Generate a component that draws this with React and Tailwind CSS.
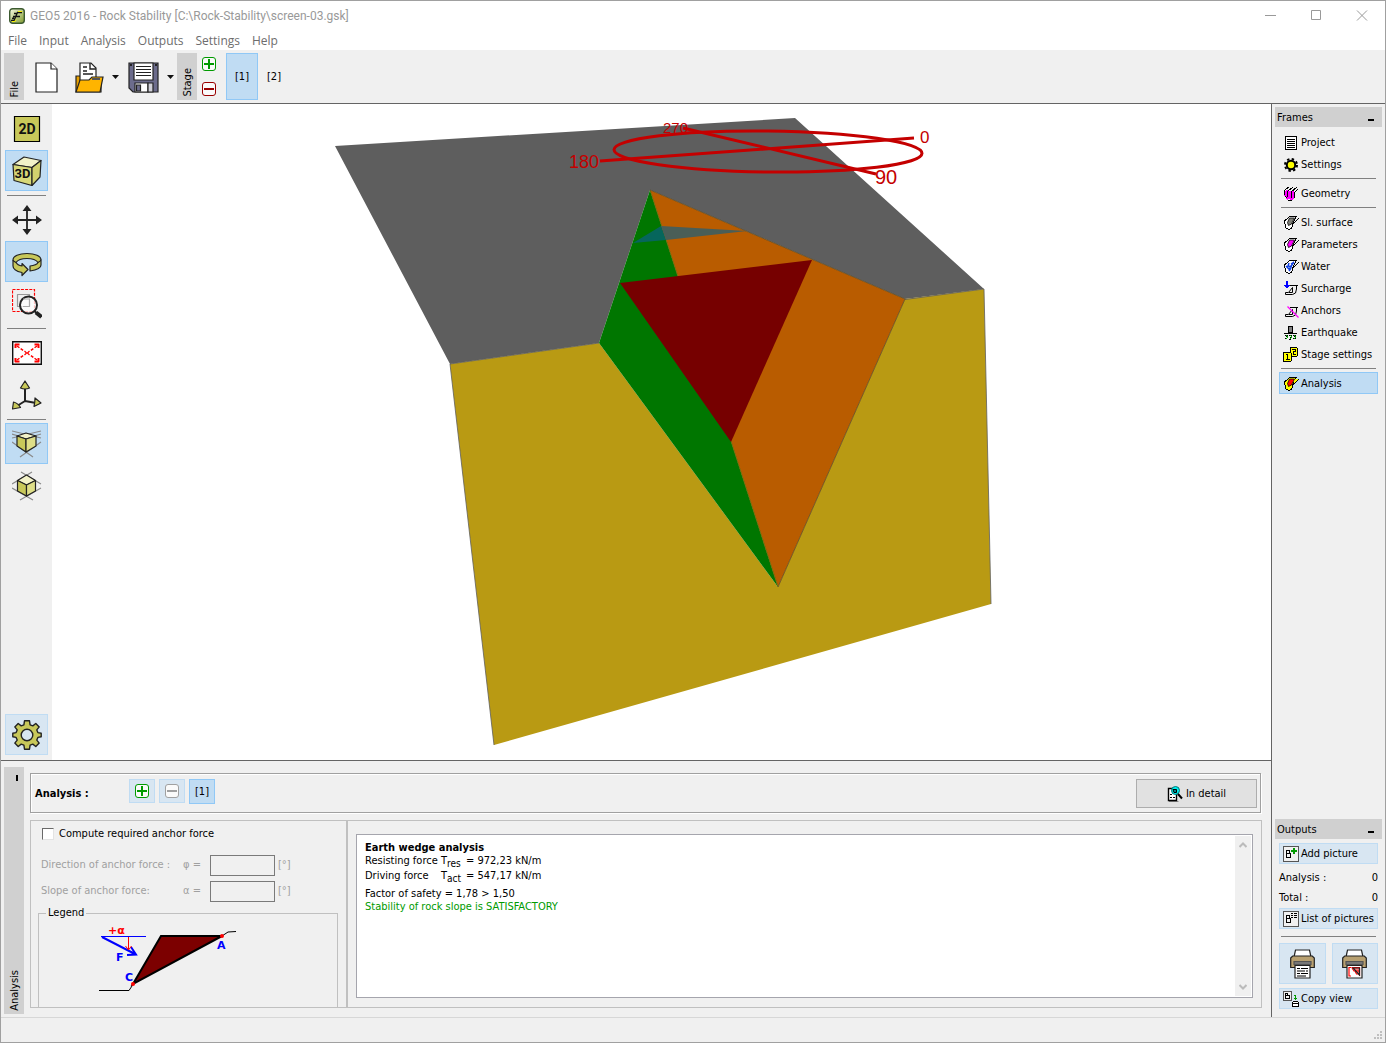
import clsx from "clsx";

const TAHOMA = "font-['DejaVu_Sans_Condensed','DejaVu_Sans','Noto_Sans',sans-serif]";

const MENU = ["File", "Input", "Analysis", "Outputs", "Settings", "Help"];

const FRAMES = [
  [
    { label: "Project", icon: <ProjectIcon /> },
    { label: "Settings", icon: <CogIcon /> },
  ],
  [{ label: "Geometry", icon: <GeometryIcon /> }],
  [
    { label: "Sl. surface", icon: <RockIcon fill="#808078" /> },
    { label: "Parameters", icon: <RockIcon fill="#ff00ff" /> },
    { label: "Water", icon: <WaterIcon /> },
    { label: "Surcharge", icon: <SurchargeIcon /> },
    { label: "Anchors", icon: <AnchorsIcon /> },
    { label: "Earthquake", icon: <EarthquakeIcon /> },
    { label: "Stage settings", icon: <StageIcon /> },
  ],
  [{ label: "Analysis", icon: <RockIcon fill="#ff0000" body="#ffff00" />, active: true }],
];

/* ---------- small icons ---------- */

function Small({ children }) {
  return (
    <svg className="w-4 h-4 shrink-0" viewBox="0 0 16 16" fill="none" stroke="#000" strokeWidth="1" shapeRendering="crispEdges">
      {children}
    </svg>
  );
}

function ProjectIcon() {
  return (
    <Small>
      <path d="M2.500 1.500h11v13h-11z" fill="#fff" />
      <path d="M4 4.500h8M4 6.500h8M4 8.500h8M4 10.500h8M4 12.500h8" />
    </Small>
  );
}

function CogIcon() {
  return (
    <Small>
      <g shapeRendering="auto">
        <circle cx="8" cy="8" r="6" strokeWidth="2" strokeDasharray="2.360 2.352" />
        <circle cx="8" cy="8" r="4.200" fill="#ff0" strokeWidth="2" />
      </g>
    </Small>
  );
}

function GeometryIcon() {
  return (
    <Small>
      <path d="M1 5l3-1 2 1h5l1 2-1 6-3 1-2-1-2 1-1-3-2-1z" fill="#f0f" stroke="none" />
      <path d="M1.500 4v5M4.500 5v6M8.500 6v6M11.500 6v6M2 4l4-3M5 5l5-4M8 6l6-5M11 7l4-4M2 10l2 2M5 14h4" />
    </Small>
  );
}

function RockOutline({ body }) {
  return (
    <>
      <path d="M6.500 1.500L1.500 6v2.500l1.500 1-0.500 3 3 2 3-1 1.500-5 3-7z" fill={body} />
      <path d="M10 9l3-3 3-3" />
      <path d="M6 1.500h7" />
    </>
  );
}

function RockIcon({ fill, body = "#fff" }) {
  return (
    <Small>
      <RockOutline body={body} />
      {body !== "#fff" && <path d="M11 6.500L14.500 3h-3" fill={body} stroke={body} />}
      <path d="M6.500 3h5l-3 6-3 1.500-1-3z" fill={fill} shapeRendering="auto" strokeWidth="0.800" />
    </Small>
  );
}

function WaterIcon() {
  return (
    <Small>
      <RockOutline body="#fff" />
      <path d="M3 7l3 3 5-7M6 4l-1 3 4 1M11 3L8 5M6 12l2-3" stroke="#1040e0" strokeWidth="1.500" shapeRendering="auto" />
    </Small>
  );
}

function Slope() {
  return (
    <>
      <path d="M7 4.500h8M13.500 5v3l-1 4-3 1.500h-7v-2h3l4-5v5H6" shapeRendering="auto" />
    </>
  );
}

function SurchargeIcon() {
  return (
    <Small>
      <Slope />
      <path d="M2 0h2v4h2v1H5v1H4v1H2V6H1V5H0V4h2z" fill="#00f" stroke="none" transform="translate(1 0)" />
    </Small>
  );
}

function AnchorsIcon() {
  return (
    <Small>
      <Slope />
      <path d="M4.500 3.500l11 11" stroke="#f0f" strokeWidth="1.200" shapeRendering="auto" />
    </Small>
  );
}

function EarthquakeIcon() {
  return (
    <Small>
      <path d="M5.500 1.500h4v6h-4z" fill="#808080" />
      <path d="M1 8.500h13" />
      <path d="M2 10.500h3M6 10.500h3M10 10.500h3M3 11.500h1M7 12.500h2M11 11.500h1M2 13.500h2M6 14.500h2M10 13.500h3" />
      <path d="M3 10l2 2-2 2M7 10l2 2-2 2M11 10l2 2-2 2" stroke="#0a0" />
    </Small>
  );
}

function StageIcon() {
  return (
    <Small>
      <path d="M7.500 0.500h6l1 1v7l-1 1h-6z" fill="#ff0" />
      <path d="M0.500 5.500h7l1 1v7l-1 1h-7z" fill="#ff0" />
      <path d="M3 7.500h1.500V13M3 12.500h4" />
      <path d="M9 2.500h3.500v2H10v2.500h3" />
    </Small>
  );
}

function PictureFrame({ children }) {
  return (
    <>
      <path d="M0.500 0.500h15v15h-15z" fill="#f0f0f0" stroke="#555" />
      <path d="M3.500 4.500h3v3h-3zM3.500 7.500h4v4h-4z" />
      {children}
    </>
  );
}

function AddPictureIcon() {
  return (
    <Small>
      <PictureFrame>
        <path d="M8 5h6M11 2v6" stroke="#009a00" strokeWidth="2" />
      </PictureFrame>
    </Small>
  );
}

function ListIcon() {
  return (
    <Small>
      <PictureFrame>
        <path d="M8 2.500h2M11 2.500h3M8 4.500h2M11 4.500h3M8 6.500h2M11 6.500h3" />
      </PictureFrame>
    </Small>
  );
}

function CopyIcon() {
  return (
    <Small>
      <path d="M0.500 0.500h8v9h-8z" fill="#f0f0f0" stroke="#555" />
      <path d="M2.500 2.500h2v2h-2zM2.500 4.500h4v3h-4z" />
      <path d="M11 4.500h1.500V9M11 7.500h3" stroke="#009a00" />
      <path d="M9.500 11.500l1-1h4l1 1v4h-6zM9.500 12.500h6" fill="#fff" />
    </Small>
  );
}

function DetailIcon() {
  return (
    <svg className="w-4 h-4" viewBox="0 0 16 16" fill="none" stroke="#000">
      <path d="M2 15.500h9.500" stroke="#888" />
      <path d="M1.500 2.500h4l4 4v8h-8z" fill="#fff" strokeWidth="1.400" />
      <path d="M3 8.500h2M3 11.500h2M6 11.500h2" />
      <circle cx="8.500" cy="4.500" r="4" fill="#00f0f0" stroke="#077" />
      <path d="M6 3.500h3.500v3H7z" fill="#088" />
      <path d="M11 8l4 4.500" strokeWidth="2" />
    </svg>
  );
}

function PlusMinus({ kind, color }) {
  return (
    <svg className="w-[14px] h-[14px]" viewBox="0 0 14 14" fill="none" stroke={color}>
      <rect x="0.5" y="0.5" width="13" height="13" rx="2.5" fill="#fafafa" />
      <path d={kind === "plus" ? "M2 7h10M7 2v10" : "M2 7h10"} strokeWidth="2" />
    </svg>
  );
}

/* ---------- toolbar icons ---------- */

function AppIcon() {
  return (
    <svg className="w-4 h-4" viewBox="0 0 16 16">
      <defs>
        <linearGradient id="app" x1="0" y1="0" x2="1" y2="1">
          <stop offset="0" stopColor="#f8fbe6" />
          <stop offset="1" stopColor="#7f9a2c" />
        </linearGradient>
      </defs>
      <rect x="0.7" y="0.7" width="14.600" height="14.600" rx="3" fill="url(#app)" stroke="#3c5a30" strokeWidth="1.400" />
      <path d="M2 12.500h3l3.500-8h4.500M4 8.500h7M5 5.500h3M3 10.500l2-0.500" fill="none" stroke="#111" strokeWidth="1.300" />
      <path d="M3 13.500h3l1-2M9 3.500h4" fill="none" stroke="#f4f000" />
    </svg>
  );
}

function NewIcon() {
  return (
    <svg className="w-[23px] h-[31px]" viewBox="0 0 23 31" fill="#fff" stroke="#222" strokeWidth="1.200">
      <path d="M1 1h15l6 6v23H1z" />
      <path d="M16 1v6h6" />
    </svg>
  );
}

function OpenIcon() {
  return (
    <svg className="w-[29px] h-[31px]" viewBox="0 0 29 31" fill="none" stroke="#222" strokeWidth="1.200">
      <path d="M1 30V14h4l2 2h19v14z" fill="#e69f00" />
      <path d="M5 20V1h11l5 5v13z" fill="#fff" />
      <path d="M15 1v6h6M8 5h4M8 9h4M8 12h10" strokeWidth="1.400" />
      <path d="M1 30l4-12h9l3-3h11l-3 15z" fill="#ffb400" />
      <path d="M17 17h8" stroke="#555" strokeWidth="2" />
    </svg>
  );
}

function SaveIcon() {
  return (
    <svg className="w-[31px] h-[31px]" viewBox="0 0 31 31" fill="none" stroke="#222" strokeWidth="1.200">
      <path d="M1 1h29v29H5l-4-4z" fill="#6c6c8c" />
      <path d="M6 1h19v17H6z" fill="#fff" />
      <path d="M8 4.500h15M8 7.500h15M8 10.500h15M8 13.500h15" strokeWidth="1.200" />
      <path d="M2 3h2M27 3h2" strokeWidth="2" />
      <path d="M7 21h13v9H7z" fill="#fff" />
      <path d="M8.500 23h4v6h-4z" fill="#6c6c8c" />
      <path d="M20 21h5v9h-5z" fill="#d0d0d8" />
    </svg>
  );
}

function Caret() {
  return (
    <svg className="w-[7px] h-1" viewBox="0 0 7 4">
      <path d="M0 0h7L3.500 4z" fill="#111" />
    </svg>
  );
}

/* ---------- view icons, 30px grid ---------- */

function View({ children }) {
  return (
    <svg className="w-[30px] h-[30px]" viewBox="0 0 30 30" fill="none" stroke="#222" strokeWidth="1.200" strokeLinejoin="round">
      {children}
    </svg>
  );
}

const TWO_D = (
  <View>
    <path d="M2.500 2.500h25v25h-25z" fill="#c8c85a" stroke="#000" strokeLinejoin="miter" />
    <text x="15" y="20" textAnchor="middle" fontSize="14" fontWeight="700" fontFamily="Roboto, sans-serif" fill="#111" stroke="none">2D</text>
  </View>
);

const THREE_D = (
  <View>
    <path d="M1 8.500L12 1l17 3.500L20 11.500z" fill="#f2f2c8" />
    <path d="M1 8.500l19 3v18L2 24.500z" fill="#d8d878" />
    <path d="M20 11.500l9-7-1 16.500-8 8.500z" fill="#d2d26e" />
    <text x="10.500" y="22" textAnchor="middle" fontSize="13" fontWeight="700" fontFamily="Roboto, sans-serif" fill="#111" stroke="none">3D</text>
  </View>
);

const PAN = (
  <View>
    <path d="M15 4v22M4 15h22" strokeWidth="1.800" />
    <path d="M15 0l4.500 6h-9zM15 30l-4.500-6h9zM0 15l6-4.500v9zM30 15l-6 4.500v-9z" fill="#222" stroke="none" />
  </View>
);

const ROTATE = (
  <View>
    <path d="M1 13C1 9 7 6.500 15 6.500S29 9 29 13v5c0 3-4 5-11 6v-5c5-0.500 7-1.500 8-3.500-2-3-6-4-11-4s-9 1-11 4c1 2 3 3 6 3.500v-2.500l6 6-6 6v-3c-5-1-9-3.500-9-6.500z" fill="#c8c85a" />
    <path d="M4 15.500C2 14.500 1 14 1 13M26 15.500c2-1 3-2 3-3" />
  </View>
);

const ZOOM = (
  <View>
    <path d="M0.500 0.500h22v22h-22z" stroke="#f00" strokeDasharray="3 1.200" />
    <path d="M5.500 5.500h12v12h-12z" stroke="#999" />
    <circle cx="16.500" cy="16" r="8.500" fill="#fff" fillOpacity="0.750" strokeWidth="2" />
    <path d="M11 10h6.500v7.500H11" stroke="#aaa" />
    <path d="M22.500 22l2 2" strokeWidth="2" />
    <path d="M24 23.500l5.500 4.500" strokeWidth="4" />
  </View>
);

const FIT = (
  <View>
    <path d="M0.700 3.700h28.600v22.600H0.700z" fill="#fff" stroke="#111" strokeLinejoin="miter" strokeWidth="1.400" />
    <path d="M5 8l7 5M25 8l-7 5M5 22l7-5M25 22l-7-5" stroke="#f00" strokeWidth="1.500" strokeDasharray="3 1.500" />
    <path d="M12.500 13l2 2-2 2M17.500 13l-2 2 2 2M14 15h2" stroke="#f00" />
    <path d="M3.500 10V6.500H7.500M26.500 10V6.500H22.500M3.500 20v3.500H7.500M26.500 20v3.500H22.500" stroke="#f00" strokeWidth="2" />
  </View>
);

const AXES = (
  <View>
    <path d="M13 6v15M13 21l-8 5M13 21l11 2" strokeWidth="2" />
    <path d="M13 1l4.500 7q-4.500 2-9 0zM0.500 29l1-7q5 1.500 7 5.500zM29 23l-6-5q0 4-1 8.500z" fill="#c8c85a" />
  </View>
);

const PERSPECTIVE = (
  <View>
    <path d="M0 2l29 7M29 2L0 9M0 5l10 3M29 5l-10 3M0 13l21 15M29 13L8 28" stroke="#8a8a8a" />
    <path d="M5 7l9-3 10 3-10 3z" fill="#f2f2c8" />
    <path d="M5 7l9 3v13l-9-6z" fill="#c8c85a" />
    <path d="M24 7l-10 3v13l10-6z" fill="#dede88" />
  </View>
);

const ORTHO = (
  <View>
    <path d="M9 1l20 12M20 1L0 13M0 17l21 12M29 17L8 29" stroke="#8a8a8a" />
    <path d="M5.500 9.500L14.500 4l9 5.500-9 4.500z" fill="#f2f2c8" />
    <path d="M5.500 9.500l9 4.500v11l-9-5z" fill="#c8c85a" />
    <path d="M23.500 9.500l-9 4.500v11l9-5z" fill="#dede88" />
  </View>
);

const GEAR = (
  <View>
    <path
      d="M12.500 0.800h5l0.600 4 2.700 1.100 3-2.400 3.400 3.400-2.400 3 1.100 2.700 3.300 0.600v3.600l-3.300 0.600-1.100 2.700 2.400 3-3.400 3.400-3-2.400-2.700 1.100-0.600 4h-5l-0.600-4-2.700-1.100-3 2.400-3.400-3.400 2.400-3-1.100-2.700-3.300-0.600v-3.600l3.300-0.600 1.100-2.700-2.400-3 3.400-3.400 3 2.400 2.700-1.100z"
      fill="#c8c85a"
      strokeWidth="1.400"
    />
    <circle cx="15" cy="15" r="5.800" fill="#d8e6f2" strokeWidth="1.400" />
  </View>
);

const VIEW_GROUPS = [
  [
    { name: "2D view", icon: TWO_D },
    { name: "3D view", icon: THREE_D, active: true },
  ],
  [
    { name: "Pan", icon: PAN },
    { name: "Rotate", icon: ROTATE, active: true },
    { name: "Zoom window", icon: ZOOM },
  ],
  [
    { name: "Fit to screen", icon: FIT },
    { name: "Axes", icon: AXES },
  ],
  [
    { name: "Perspective", icon: PERSPECTIVE, active: true },
    { name: "Orthographic", icon: ORTHO },
  ],
];

function PrinterIcon({ children }) {
  return (
    <svg className="w-[25px] h-[30px]" viewBox="0 0 25 30" fill="none" stroke="#222" strokeWidth="1.200">
      <path d="M4 8L5.500 1h14L21 8z" fill="#fff" />
      <path d="M0.700 9l2-2h19.600l2 2v9.500H0.700z" fill="#b8a070" />
      <path d="M4 12.500h17v3H4z" fill="#777" stroke="#555" />
      <path d="M5 16.500h15v12.500H5z" fill="#fff" />
      {children}
    </svg>
  );
}

/* ---------- panels ---------- */

function SideTab({ label, marker }) {
  return (
    <div className={clsx("w-5 bg-[#d0d0d0] flex flex-col items-center pb-[3px] pl-0.5", marker ? "justify-between pt-2" : "justify-end")}>
      {marker && <span className="w-0.5 h-1.5 bg-black ml-1" />}
      <span className="[writing-mode:vertical-rl] rotate-180 leading-4">{label}</span>
    </div>
  );
}

function TitleBar() {
  return (
    <header className="bg-white font-['Open_Sans','Noto_Sans',sans-serif] text-[12px]">
      <div className="h-[30px] flex items-center pl-2 text-[#999]">
        <AppIcon />
        <h1 className="flex-1 pl-[5px] font-[Roboto,'Open_Sans',sans-serif]">GEO5 2016 - Rock Stability [C:\Rock-Stability\screen-03.gsk]</h1>
        <div className="flex">
          <button aria-label="Minimize" className="w-[46px] flex justify-center">
            <svg className="w-3 h-3" viewBox="0 0 12 12"><path d="M1 5.500h11" stroke="#999" /></svg>
          </button>
          <button aria-label="Maximize" className="w-[46px] flex justify-center">
            <svg className="w-3 h-3" viewBox="0 0 12 12"><path d="M1.500 0.500h9v9h-9z" fill="none" stroke="#999" /></svg>
          </button>
          <button aria-label="Close" className="w-[46px] flex justify-center">
            <svg className="w-3 h-3" viewBox="0 0 12 12"><path d="M1 0.500l10 10M11 0.500L1 10.500" stroke="#999" /></svg>
          </button>
        </div>
      </div>
      <nav className="h-[19px] flex items-center gap-3 pl-[7px] text-[#6d6d6d]">
        {MENU.map((item) => (
          <button key={item}>{item}</button>
        ))}
      </nav>
    </header>
  );
}

function Toolbar() {
  return (
    <div className="h-[54px] flex border-b border-[#646464] pl-[3px] py-[3px]">
      <SideTab label="File" />
      <div className="flex items-center pl-[11px] pt-px">
        <button aria-label="New"><NewIcon /></button>
        <button aria-label="Open" className="ml-[17px]"><OpenIcon /></button>
        <button aria-label="Open recent" className="ml-2"><Caret /></button>
        <button aria-label="Save" className="ml-[9px]"><SaveIcon /></button>
        <button aria-label="Save as" className="ml-2 mr-[3px]"><Caret /></button>
      </div>
      <SideTab label="Stage" />
      <div className="flex flex-col justify-between pl-[5px] py-1 pr-[10px]">
        <button aria-label="Add stage"><PlusMinus kind="plus" color="#009a00" /></button>
        <button aria-label="Remove stage"><PlusMinus kind="minus" color="#900" /></button>
      </div>
      <button className="w-8 pt-0.5 bg-[#c0dcf3] border border-[#90c8f6]">[1]</button>
      <button className="w-8 pt-0.5">[2]</button>
    </div>
  );
}

function ViewBar() {
  return (
    <div className="w-[51px] flex flex-col items-center pt-1 pb-[5px]">
      {VIEW_GROUPS.map((group, i) => (
        <div key={i} className="flex flex-col items-center">
          {i > 0 && <div className="w-[39px] h-px bg-[#808080] my-[3px]" />}
          {group.map((v) => (
            <button
              key={v.name}
              aria-label={v.name}
              className={clsx(
                "w-[43px] h-[41px] mb-px flex items-center justify-center border",
                v.active ? "bg-[#c0dcf3] border-[#90c8f6]" : "border-transparent"
              )}
            >
              {v.icon}
            </button>
          ))}
        </div>
      ))}
      <button aria-label="Drawing settings" className="w-[43px] h-[41px] mt-auto flex items-center justify-center bg-[#d8e6f2] border border-[#c0dcf3]">
        {GEAR}
      </button>
    </div>
  );
}

function Scene() {
  return (
    <div className="flex-1 min-w-0 min-h-0 bg-white">
      <svg className="w-full h-full" viewBox="52 104 1219 656">
        <path d="M335 146L795 118 984 289 905 299 650 190 599 343 450 364z" fill="#5e5e5e" />
        <path d="M450 364L599 343 778 587 905 299 984 289 991 604 494 745z" fill="#b99a13" />
        <path d="M450 364l149-21M905 299.500l79-10.500M450 364l44 381M984 289l7 315" stroke="#5e5e5e" strokeWidth="0.8" />
        <path d="M650 190L599 343 778 587z" fill="#007600" />
        <path d="M650 190L905 299 778 587z" fill="#b95c00" />
        <path d="M650 190L778 587" stroke="#5c6900" strokeWidth="0.8" />
        <path d="M650 190L905 299 778 587" fill="none" stroke="#5e4a20" strokeWidth="0.8" />
        <path d="M661 226L633 243l33-3z" fill="#06665c" />
        <path d="M661 226l86 5-81 9z" fill="#4a5e57" />
        <path d="M620 283L812 260 731 442z" fill="#760000" />
        <g fill="none" stroke="#c40000" strokeWidth="3">
          <ellipse cx="768" cy="151.500" rx="154" ry="20.500" transform="rotate(0.7 768 151.500)" />
          <path d="M600 161L914 138M683 128L876 174" />
        </g>
        <g fill="#c40000" fontFamily="Liberation Sans, sans-serif">
          <text x="920" y="143" fontSize="17">0</text>
          <text x="569" y="168" fontSize="18">180</text>
          <text x="875" y="184" fontSize="20">90</text>
          <text x="663" y="133" fontSize="15">270</text>
        </g>
      </svg>
    </div>
  );
}

function AngleRow({ id, label, symbol }) {
  return (
    <div className="h-[21px] flex items-center text-[#a0a0a0]">
      <label htmlFor={id} className="w-[142px]">{label}</label>
      <span className="w-[27px]">{symbol} =</span>
      <input id={id} disabled className="w-[65px] h-[21px] border border-[#7a7a7a] bg-[#f0f0f0] px-1" />
      <span className="pl-[3px]">[°]</span>
    </div>
  );
}

function Legend() {
  return (
    <fieldset className="flex-1 ml-[7px] mr-2 mt-[3px] border border-b-0 border-[#c0c0c0]">
      <legend className="ml-[7px] px-0.5 leading-4">Legend</legend>
      <svg className="w-full h-[86px]" viewBox="39 921 298 86" fill="none">
        <path d="M99 990.500h30l4-6M222 936l6-4 8-0.500" stroke="#000" />
        <path d="M161 936h61l-89 48z" fill="#7c0000" stroke="#000" strokeWidth="2" />
        <path d="M101 936.500h45" stroke="#00f" />
        <path d="M102 937l33 17M131 947l5 7.500-9 0.500" stroke="#00f" strokeWidth="2" />
        <path d="M128.500 937v12M125.500 946l3 4 3-4" stroke="#f00" />
        <circle cx="222" cy="936" r="2" fill="#f00" />
        <circle cx="133" cy="984" r="2" fill="#f00" />
        <g fontSize="11" fontWeight="700" fontFamily="DejaVu Sans, sans-serif" fill="#00f">
          <text x="108" y="934" fill="#f00">+α</text>
          <text x="116" y="961">F</text>
          <text x="125" y="981">C</text>
          <text x="217" y="949">A</text>
        </g>
      </svg>
    </fieldset>
  );
}

function Results() {
  return (
    <div className="flex-1 bg-white border border-[#a5a5ad] flex p-px">
      <div className="flex-1 pl-[7px] pt-[5px] leading-[13px]">
        <h2 className="font-bold">Earth wedge analysis</h2>
        <div className="grid grid-cols-[76px_25px_auto] justify-start gap-y-0.5">
          <span>Resisting force</span>
          <span>T<sub className="text-[10px]">res</sub></span>
          <span>= 972,23 kN/m</span>
          <span>Driving force</span>
          <span>T<sub className="text-[10px]">act</sub></span>
          <span>= 547,17 kN/m</span>
        </div>
        <p className="mt-[5px]">Factor of safety = 1,78 &gt; 1,50</p>
        <p className="text-[#009a00]">Stability of rock slope is SATISFACTORY</p>
      </div>
      <div className="w-4 bg-[#f0f0f0] flex flex-col items-center justify-between py-[6px]">
        <svg className="w-2 h-[6px]" viewBox="0 0 8 6" fill="none" stroke="#bbb" strokeWidth="2"><path d="M0.500 5L4 1.500 7.500 5" /></svg>
        <svg className="w-2 h-[6px]" viewBox="0 0 8 6" fill="none" stroke="#bbb" strokeWidth="2"><path d="M0.500 1L4 4.500 7.500 1" /></svg>
      </div>
    </div>
  );
}

function AnalysisPanel() {
  return (
    <section className="flex border-t border-[#646464] pl-[3px] pt-[6px] pb-[3px]">
      <SideTab label="Analysis" marker />
      <div className="flex-1 flex flex-col pl-[6px] pr-[9px] pt-[6px] pb-[6px]">
        <div className="h-10 mr-px flex items-center border border-[#a0a0a0] pl-1 pr-[3px] shadow-[1px_1px_0_#fff,inset_1px_1px_0_#fff]">
          <h2 className="font-bold w-[94px] pt-0.5">Analysis :</h2>
          <div className="flex-1 flex gap-1 pb-1">
            <button aria-label="Add analysis" className="w-[26px] h-6 flex items-center justify-center bg-[#d8e6f2] border border-[#c0dcf3]">
              <PlusMinus kind="plus" color="#009a00" />
            </button>
            <button aria-label="Remove analysis" disabled className="w-[26px] h-6 flex items-center justify-center bg-[#d8e6f2] border border-[#c0dcf3]">
              <PlusMinus kind="minus" color="#a0a0a0" />
            </button>
            <button className="w-[26px] h-[25px] pt-0.5 bg-[#c0dcf3] border border-[#90c8f6]">[1]</button>
          </div>
          <button className="w-[121px] h-[29px] pt-0.5 flex items-center justify-center gap-[3px] bg-[#e1e1e1] border border-[#adadad]">
            <DetailIcon /> In detail
          </button>
        </div>
        <div className="flex-1 flex mt-[7px] border border-[#c0c0c0]">
          <div className="w-[317px] flex flex-col pt-1 border-r-2 border-[#c0c0c0]">
            <label className="h-[18px] flex items-center gap-[5px] pl-[11px]">
              <input type="checkbox" className="appearance-none w-3 h-3 bg-white border border-[#e3e3e3] border-t-[#696969] border-l-[#696969]" />
              Compute required anchor force
            </label>
            <div className="flex flex-col gap-[5px] mt-3 pl-[10px]">
              <AngleRow id="phi" label="Direction of anchor force :" symbol="φ" />
              <AngleRow id="alpha" label="Slope of anchor force:" symbol="α" />
            </div>
            <Legend />
          </div>
          <div className="flex-1 flex pl-2 pr-2 pt-[13px] pb-[9px]">
            <Results />
          </div>
        </div>
      </div>
    </section>
  );
}

function SideHeader({ children }) {
  return (
    <div className="h-5 pt-0.5 bg-[#d0d0d0] flex items-center justify-between pl-0.5 pr-2">
      <h2>{children}</h2>
      <button aria-label="Collapse" className="w-[6px] h-0.5 bg-black mt-1" />
    </div>
  );
}

function OutputButton({ icon, label }) {
  return (
    <button className="h-[21px] pt-px flex items-center gap-0.5 pl-[3px] whitespace-nowrap bg-[#d8e6f2] border border-[#c0dcf3]">
      {icon} {label}
    </button>
  );
}

function Sidebar() {
  return (
    <aside className="w-[114px] flex flex-col justify-between border-l border-[#646464] pl-[3px] pr-[3px] pt-[3px] pb-2">
      <div>
        <SideHeader>Frames</SideHeader>
        <nav className="pt-1 pl-1 pr-[4px]">
          {FRAMES.map((group, i) => (
            <div key={i}>
              {i > 0 && <div className="h-px bg-[#808080] my-[3px] mx-0.5" />}
              {group.map((f) => (
                <button
                  key={f.label}
                  className={clsx(
                    "w-full h-[22px] pt-0.5 flex items-center gap-0.5 pl-[3px] border whitespace-nowrap",
                    f.active ? "bg-[#c0dcf3] border-[#90c8f6]" : "border-transparent"
                  )}
                >
                  {f.icon} {f.label}
                </button>
              ))}
            </div>
          ))}
        </nav>
      </div>
      <div>
        <SideHeader>Outputs</SideHeader>
        <div className="flex flex-col pt-1 pl-1 pr-[4px]">
          <OutputButton icon={<AddPictureIcon />} label="Add picture" />
          <dl className="grid grid-cols-[1fr_auto] leading-5 pt-1">
            <dt>Analysis :</dt>
            <dd>0</dd>
            <dt>Total :</dt>
            <dd>0</dd>
          </dl>
          <OutputButton icon={<ListIcon />} label="List of pictures" />
          <div className="h-px bg-[#808080] mt-[7px] mb-[6px] mx-0.5" />
          <div className="grid grid-cols-2 gap-[6px] mb-1">
            <button aria-label="Print text" className="h-[41px] flex items-center justify-center bg-[#d8e6f2] border border-[#c0dcf3]">
              <PrinterIcon>
                <path d="M7 19.500h3M11 19.500h7M7 22h8M16 22h2M7 24.500h3M11 24.500h7M7 27h9" stroke="#000" />
              </PrinterIcon>
            </button>
            <button aria-label="Print picture" className="h-[41px] flex items-center justify-center bg-[#d8e6f2] border border-[#c0dcf3]">
              <PrinterIcon>
                <path d="M9 18.500H7v8.500h2M9.500 18.500h8v8.500M10 19l2 3h5M13 22l1.500 3H17" stroke="#f00" />
                <path d="M11 19h6.500v7z" fill="#f00" fillOpacity="0.500" />
              </PrinterIcon>
            </button>
          </div>
          <OutputButton icon={<CopyIcon />} label="Copy view" />
        </div>
      </div>
    </aside>
  );
}

export default function App() {
  return (
    <div className={clsx("h-screen flex flex-col bg-[#f0f0f0] border border-[#a0a0a0] text-[11px] text-black", TAHOMA)}>
      <TitleBar />
      <Toolbar />
      <div className="flex-1 min-h-0 flex">
        <main className="flex-1 min-w-0 flex flex-col">
          <div className="flex-1 min-h-0 flex">
            <ViewBar />
            <Scene />
          </div>
          <AnalysisPanel />
        </main>
        <Sidebar />
      </div>
      <footer className="h-[25px] flex items-end justify-end border-t border-[#d7d7d7] p-0.5">
        <svg className="w-[9px] h-[9px]" viewBox="0 0 9 9" fill="#bfbfbf">
          <path d="M6 0h2v2H6zM3 3h2v2H3zM6 3h2v2H6zM0 6h2v2H0zM3 6h2v2H3zM6 6h2v2H6z" />
        </svg>
      </footer>
    </div>
  );
}
